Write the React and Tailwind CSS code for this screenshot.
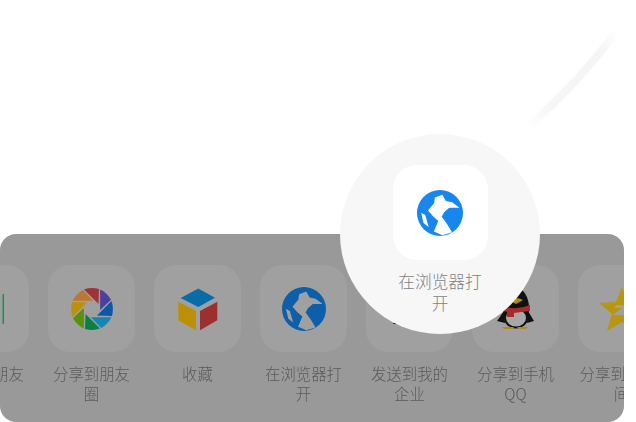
const blades = ['#a03238', '#4a40a0', '#0b58a6', '#1585b8', '#068244', '#58920c', '#ba9208', '#bc7732']

function Aperture() {
  return (
    <svg viewBox="-22 -22 44 44" className="w-11 h-11">
      {blades.map((color, i) => (
        <path key={color} d="M-8 -19.5 Q-1 -22 7 -20 L6.5 -5 Z" fill={color} transform={`rotate(${i * 45})`} />
      ))}
    </svg>
  )
}

function Cube() {
  return (
    <svg viewBox="176 285 44 46" className="w-11 h-[46px]">
      <path d="M198.3 287.5 215 296.7 198.3 306 180.7 297Z" fill="#066da8" />
      <path d="M178.3 300.7 196 310V329.3L178.3 319.3Z" fill="#bb9004" />
      <path d="M200 310 217.3 300.7V319.3L200 329.3Z" fill="#9c3030" />
    </svg>
  )
}

function Globe({ className, color, land }) {
  return (
    <svg viewBox="48 40 134 134" className={className}>
      <circle cx="115" cy="107" r="67" fill={color} />
      <path d="M100 62 122 54 132 72 150 76 172 92 142 92 127 105 120 118 136 140 150 163 122 172 97 161 110 130 94 116 80 100 98 78Z" fill={land} />
      <path d="M60 106 72 113 82 148 67 136Z" fill={land} />
    </svg>
  )
}

function Penguin() {
  return (
    <svg viewBox="0 0 44 44" className="w-11 h-11">
      <ellipse cx="22" cy="21" rx="13" ry="20" fill="#111" />
      <path d="M10 24 3 34 11 36ZM34 24 40 34 33 36Z" fill="#111" />
      <ellipse cx="22" cy="31" rx="11" ry="9.5" fill="#a8a8a8" stroke="#111" strokeWidth="2" />
      <path d="M9 19Q22 24 36 18L36 24 20 26 20 30 13 30 13 25 9 24Z" fill="#a82a2a" />
      <path d="M14 13Q22 9 29 13L22 17Z" fill="#b58a12" />
      <path d="M8 40H20L18 42H10ZM23 40H34L32 42H25Z" fill="#b58a12" />
    </svg>
  )
}

function Star() {
  return (
    <svg viewBox="0 0 46 44" className="w-[46px] h-11">
      <path d="M23 0 29 15 46 16 33 27 38 44 23 35 8 44 13 27 0 16 17 15Z" fill="#b8960f" />
      <path d="M17 18H33L24 25H33L31 28H14L23 21H15Z" fill="#a0a0a0" />
    </svg>
  )
}

const items = [
  {
    label: '发送给朋友',
    icon: (
      <svg viewBox="0 0 44 44" className="w-11 h-11">
        <rect x="38.5" y="7" width="1.5" height="30" fill="#0c9a4c" />
      </svg>
    ),
  },
  { label: '分享到朋友圈', icon: <Aperture /> },
  { label: '收藏', icon: <Cube /> },
  { label: '在浏览器打开', icon: <Globe className="w-11 h-11" color="#0c5fa8" land="#a0a0a0" /> },
  {
    label: '发送到我的企业',
    icon: (
      <svg viewBox="0 0 44 44" className="w-11 h-11">
        <path d="M5 37 12 29 12 37Z" fill="#1a1a1a" />
      </svg>
    ),
  },
  { label: '分享到手机QQ', icon: <Penguin /> },
  { label: '分享到QQ空间', icon: <Star /> },
]

export default function App() {
  return (
    <div className="relative flex h-[422px] w-[636px] flex-col justify-end overflow-hidden bg-white pr-3 font-['Noto_Sans_CJK_SC','Noto_Sans',sans-serif]">
      <svg viewBox="0 0 636 422" className="absolute inset-0 h-full w-full">
        <defs>
          <linearGradient id="arcFade" gradientUnits="userSpaceOnUse" x1="617" y1="30" x2="527" y2="128">
            <stop offset="0" stopColor="#f5f5f5" stopOpacity="0" />
            <stop offset="0.2" stopColor="#f5f5f5" />
            <stop offset="0.75" stopColor="#f6f6f6" />
            <stop offset="1" stopColor="#f6f6f6" stopOpacity="0" />
          </linearGradient>
        </defs>
        <path d="M617 30Q584 77 527 128" fill="none" stroke="url(#arcFade)" strokeWidth="8" />
      </svg>

      <div className="relative h-[188px] overflow-hidden rounded-2xl bg-[#999999]">
        <div className="ml-[-58px] flex gap-[19px] pt-[31px] blur-[0.3px]">
          {items.map((item) => (
            <div key={item.label} className="flex w-[87px] shrink-0 flex-col items-center">
              <div className="flex h-[87px] w-[87px] items-center justify-center rounded-[22px] bg-[#a0a0a0]">
                {item.icon}
              </div>
              <p className="mt-[11px] w-[87px] text-center text-[15.4px] font-light leading-5 text-[#5a5a5a]">{item.label}</p>
            </div>
          ))}
        </div>
      </div>

      <div className="absolute left-[340px] top-[134px] flex h-[200px] w-[200px] flex-col items-center rounded-full bg-[#f7f7f7] pt-[31px]">
        <div className="flex h-[95px] w-[95px] items-center justify-center rounded-3xl bg-white">
          <Globe className="h-[46px] w-[46px]" color="#1787ef" land="#ffffff" />
        </div>
        <p className="mt-[10px] w-[90px] text-center text-[16.7px] font-light leading-[22px] text-[#7f7f7f]">在浏览器打开</p>
      </div>
    </div>
  )
}
